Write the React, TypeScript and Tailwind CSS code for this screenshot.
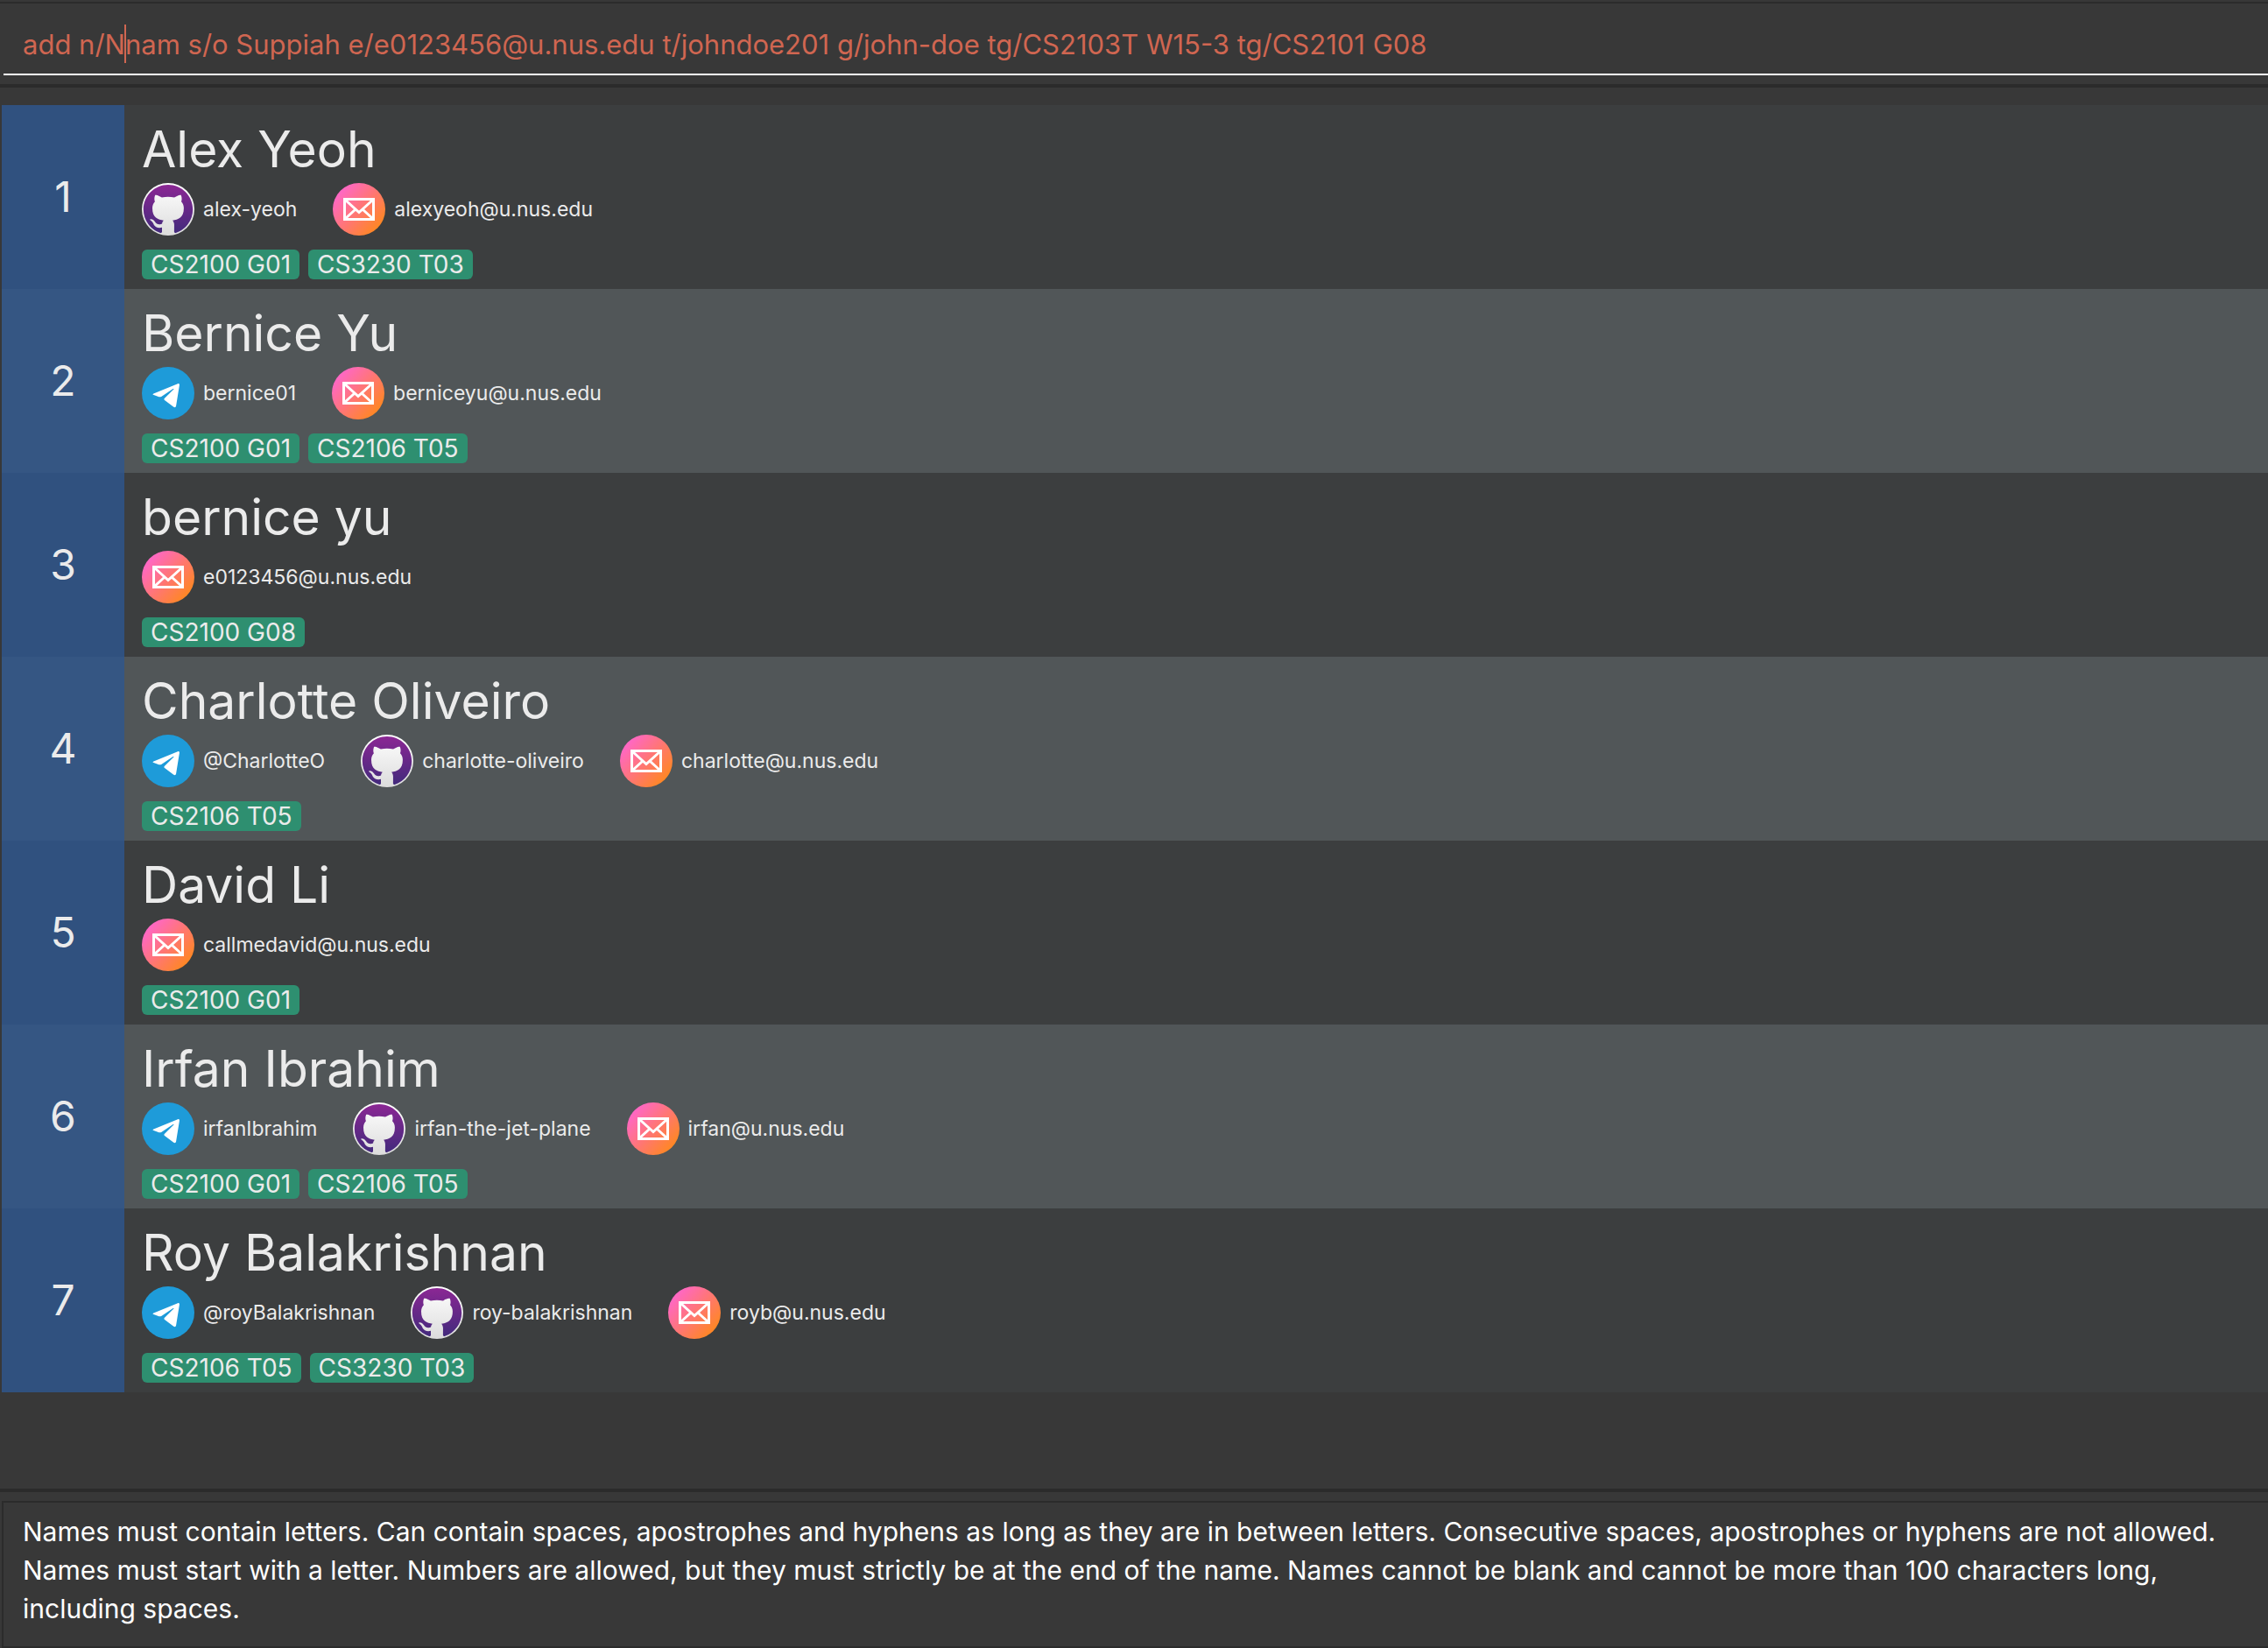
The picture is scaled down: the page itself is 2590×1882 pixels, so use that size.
import { useId, useState } from "react";

type Channel = "telegram" | "github" | "email";

interface Person {
  name: string;
  contacts: [Channel, string][];
  tags: string[];
}

const people: Person[] = [
  {
    name: "Alex Yeoh",
    contacts: [["github", "alex-yeoh"], ["email", "alexyeoh@u.nus.edu"]],
    tags: ["CS2100 G01", "CS3230 T03"],
  },
  {
    name: "Bernice Yu",
    contacts: [["telegram", "bernice01"], ["email", "berniceyu@u.nus.edu"]],
    tags: ["CS2100 G01", "CS2106 T05"],
  },
  {
    name: "bernice yu",
    contacts: [["email", "e0123456@u.nus.edu"]],
    tags: ["CS2100 G08"],
  },
  {
    name: "Charlotte Oliveiro",
    contacts: [["telegram", "@CharlotteO"], ["github", "charlotte-oliveiro"], ["email", "charlotte@u.nus.edu"]],
    tags: ["CS2106 T05"],
  },
  {
    name: "David Li",
    contacts: [["email", "callmedavid@u.nus.edu"]],
    tags: ["CS2100 G01"],
  },
  {
    name: "Irfan Ibrahim",
    contacts: [["telegram", "irfanIbrahim"], ["github", "irfan-the-jet-plane"], ["email", "irfan@u.nus.edu"]],
    tags: ["CS2100 G01", "CS2106 T05"],
  },
  {
    name: "Roy Balakrishnan",
    contacts: [["telegram", "@royBalakrishnan"], ["github", "roy-balakrishnan"], ["email", "royb@u.nus.edu"]],
    tags: ["CS2106 T05", "CS3230 T03"],
  },
];

const resultMessage =
  "Names must contain letters. Can contain spaces, apostrophes and hyphens as long as they are in between letters. Consecutive spaces, apostrophes or hyphens are not allowed.\n" +
  "Names must start with a letter. Numbers are allowed, but they must strictly be at the end of the name. Names cannot be blank and cannot be more than 100 characters long,\n" +
  "including spaces.";

function TelegramIcon() {
  return (
    <svg viewBox="0 0 60 60" className="size-[60px]" aria-label="Telegram" role="img">
      <circle cx="30" cy="30" r="30" fill="#1e9bd9" />
      <path
        d="M13.4 30.4 41 19.2c1.5-.5 2.1.3 1.900 1.800l-3.800 23.600c-.4 1.700-1.500 2-2.800 1.100L26 37.900c-.8-.7-.8-1.400 0-2.200L36.400 25.600c.4-.5-.1-.9-.8-.5L22.200 33.900c-.9.500-1.700.600-2.700.300L13.500 32c-1.300-.4-1.300-1.100-.1-1.600z"
        fill="#fff"
      />
    </svg>
  );
}

function GithubIcon() {
  const id = useId();
  return (
    <svg viewBox="0 0 60 60" className="size-[60px]" aria-label="GitHub" role="img">
      <defs>
        <linearGradient id={id + "ring"} x1="0" y1="0" x2="0" y2="1">
          <stop offset="0" stopColor="#ffffff" />
          <stop offset="1" stopColor="#dcdcdc" />
        </linearGradient>
        <linearGradient id={id + "disc"} x1="0" y1="0" x2="0" y2="1">
          <stop offset="0" stopColor="#8b2794" />
          <stop offset="1" stopColor="#432a7c" />
        </linearGradient>
      </defs>
      <circle cx="30" cy="30" r="30" fill={`url(#${id}ring)`} />
      <path
        transform="translate(1.8 1.3) scale(2.35)"
        d="M12 .297c-6.63 0-12 5.373-12 12 0 5.303 3.438 9.8 8.205 11.385.6.113.82-.258.82-.577 0-.285-.01-1.04-.015-2.04-3.338.724-4.042-1.61-4.042-1.61C4.422 18.07 3.633 17.7 3.633 17.7c-1.087-.744.084-.729.084-.729 1.205.084 1.838 1.236 1.838 1.236 1.07 1.835 2.809 1.305 3.495.998.108-.776.417-1.305.76-1.605-2.665-.3-5.466-1.332-5.466-5.93 0-1.31.465-2.38 1.235-3.22-.135-.303-.54-1.523.105-3.176 0 0 1.005-.322 3.3 1.23.96-.267 1.98-.399 3-.405 1.02.006 2.04.138 3 .405 2.28-1.552 3.285-1.23 3.285-1.23.645 1.653.24 2.873.12 3.176.765.84 1.23 1.91 1.23 3.22 0 4.61-2.805 5.625-5.475 5.92.42.36.81 1.096.81 2.22 0 1.606-.015 2.896-.015 3.286 0 .315.21.69.825.57C20.565 22.092 24 17.592 24 12.297c0-6.627-5.373-12-12-12"
        fill={`url(#${id}disc)`}
      />
    </svg>
  );
}

function EmailIcon() {
  const id = useId();
  return (
    <svg viewBox="0 0 60 60" className="size-[60px]" aria-label="Email" role="img">
      <defs>
        <linearGradient id={id + "disc"} x1="0.1" y1="0.15" x2="0.9" y2="0.85">
          <stop offset="0" stopColor="#ff66cb" />
          <stop offset="0.5" stopColor="#ff7675" />
          <stop offset="1" stopColor="#ff881f" />
        </linearGradient>
      </defs>
      <circle cx="30" cy="30" r="30" fill={`url(#${id}disc)`} />
      <path
        d="M13.5 18.5h33v23h-33zM14.500 19.500 30 33.500l15.500-14M14.500 40.500 25.500 30.500M45.500 40.500 34.500 30.500"
        fill="none"
        stroke="#fff"
        strokeWidth="3"
      />
    </svg>
  );
}

const icons = { telegram: TelegramIcon, github: GithubIcon, email: EmailIcon };

function PersonCard({ person, index }: { person: Person; index: number }) {
  return (
    <li className="group flex bg-[#3c3e3f] even:bg-[#515658]">
      <div className="flex w-[140px] shrink-0 items-center justify-center bg-[#30517f] text-[48px] leading-none group-even:bg-[#355683]">
        {index}
      </div>
      <div className="min-w-0 flex-1 px-5 pt-[14px] pb-[11px]">
        <h2 className="mb-px text-[57px] leading-[74px]">{person.name}</h2>
        <div className="flex flex-wrap gap-x-[41px]">
          {person.contacts.map(([channel, label]) => {
            const Icon = icons[channel];
            return (
              <div key={channel} className="flex items-center gap-[10px] text-[23px] leading-8">
                <Icon />
                <span>{label}</span>
              </div>
            );
          })}
        </div>
        <ul className="mt-4 flex flex-wrap gap-[10px]">
          {person.tags.map((tag) => (
            <li key={tag} className="rounded-[6px] bg-[#2e8f70] px-[10px] text-[28px] leading-[34px]">
              {tag}
            </li>
          ))}
        </ul>
      </div>
    </li>
  );
}

export default function App() {
  const [command, setCommand] = useState(
    "add n/Nnam s/o Suppiah e/e0123456@u.nus.edu t/johndoe201 g/john-doe tg/CS2103T W15-3 tg/CS2101 G08",
  );

  return (
    <main className="flex min-h-screen flex-col bg-[#383838] pt-0.5 font-['Inter',sans-serif] text-[#ebebeb]">
      <form className="border-t-2 border-b-4 border-[#2b2b2b] pb-[10px]" onSubmit={(e) => e.preventDefault()}>
        <div className="relative ml-1">
          <input
            type="text"
            aria-label="Command"
            value={command}
            onChange={(e) => setCommand(e.target.value)}
            className="block h-[82px] w-full border-b-2 border-white bg-transparent pt-3 pr-4 pl-[22px] text-[31px] text-[#d06651] outline-none"
          />
          <span aria-hidden="true" className="absolute top-6 left-[138px] h-11 w-0.5 bg-[#d06651]" />
        </div>
      </form>

      <ol className="mt-5 ml-0.5">
        {people.map((person, i) => (
          <PersonCard key={person.name} person={person} index={i + 1} />
        ))}
      </ol>

      <div className="mt-auto border-t-4 border-[#2b2b2b] pt-[10px] pl-0.5">
        <textarea
          readOnly
          rows={3}
          aria-label="Result"
          value={resultMessage}
          className="block w-full resize-none overflow-hidden border-2 border-r-0 border-[#2b2b2b] bg-transparent pt-[11px] pr-4 pb-[21px] pl-[22px] text-[30px] leading-[44px] text-white outline-none"
        />
      </div>
    </main>
  );
}
